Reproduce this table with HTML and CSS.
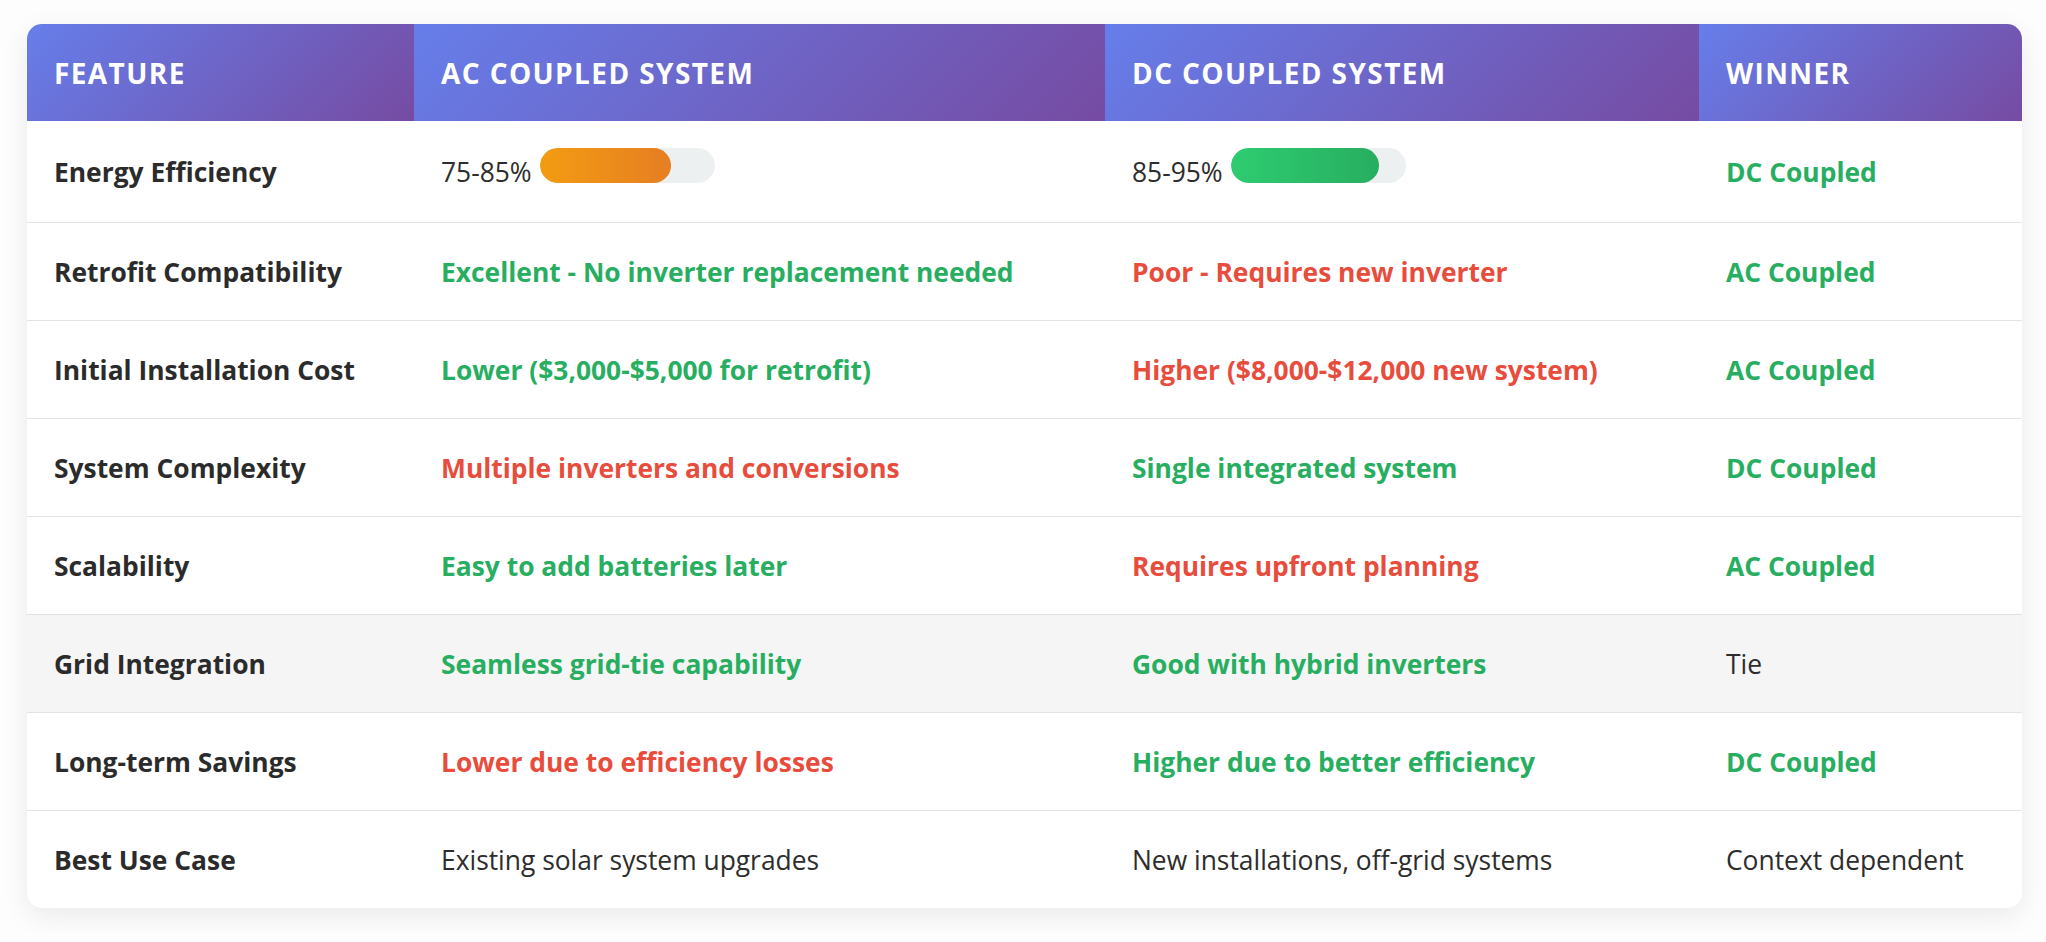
FILE: index.html
```html
<!DOCTYPE html>
<html lang="en">
<head>
<meta charset="utf-8">
<title>AC vs DC Coupled Systems</title>
<link rel="stylesheet" href="styles.css">
</head>
<body>
<div class="page">
  <div class="card">
    <table class="compare">
      <colgroup>
        <col class="c-feature">
        <col class="c-ac">
        <col class="c-dc">
        <col class="c-winner">
      </colgroup>
      <thead>
        <tr>
          <th>Feature</th>
          <th>AC Coupled System</th>
          <th>DC Coupled System</th>
          <th>Winner</th>
        </tr>
      </thead>
      <tbody>
        <tr class="row-first">
          <td class="feat">Energy Efficiency</td>
          <td><span class="pct">75-85%</span><span class="track"><span class="fill fill-orange" style="width:75%"></span></span></td>
          <td><span class="pct">85-95%</span><span class="track"><span class="fill fill-green" style="width:85%"></span></span></td>
          <td class="good">DC Coupled</td>
        </tr>
        <tr>
          <td class="feat">Retrofit Compatibility</td>
          <td class="good">Excellent - No inverter replacement needed</td>
          <td class="bad">Poor - Requires new inverter</td>
          <td class="good">AC Coupled</td>
        </tr>
        <tr>
          <td class="feat">Initial Installation Cost</td>
          <td class="good">Lower ($3,000-$5,000 for retrofit)</td>
          <td class="bad">Higher ($8,000-$12,000 new system)</td>
          <td class="good">AC Coupled</td>
        </tr>
        <tr>
          <td class="feat">System Complexity</td>
          <td class="bad">Multiple inverters and conversions</td>
          <td class="good">Single integrated system</td>
          <td class="good">DC Coupled</td>
        </tr>
        <tr>
          <td class="feat">Scalability</td>
          <td class="good">Easy to add batteries later</td>
          <td class="bad">Requires upfront planning</td>
          <td class="good">AC Coupled</td>
        </tr>
        <tr class="row-hover">
          <td class="feat">Grid Integration</td>
          <td class="good">Seamless grid-tie capability</td>
          <td class="good">Good with hybrid inverters</td>
          <td>Tie</td>
        </tr>
        <tr>
          <td class="feat">Long-term Savings</td>
          <td class="bad">Lower due to efficiency losses</td>
          <td class="good">Higher due to better efficiency</td>
          <td class="good">DC Coupled</td>
        </tr>
        <tr class="row-last">
          <td class="feat">Best Use Case</td>
          <td>Existing solar system upgrades</td>
          <td>New installations, off-grid systems</td>
          <td>Context dependent</td>
        </tr>
      </tbody>
    </table>
  </div>
</div>
</body>
</html>
```

FILE: styles.css
```css
* {
  box-sizing: border-box;
}

html, body {
  margin: 0;
  padding: 0;
  background: #fdfdfd;
}

body {
  font-family: "Open Sans", "Noto Sans", "Liberation Sans", sans-serif;
  color: #2d2d2d;
}

.page {
  padding: 24px 24px 24px 27px;
}

.card {
  background: #ffffff;
  border-radius: 15px;
  overflow: hidden;
  box-shadow: 0 8px 28px rgba(0, 0, 0, 0.08);
}

.compare {
  width: 100%;
  border-collapse: collapse;
  table-layout: fixed;
}

.c-feature { width: 387px; }
.c-ac { width: 691px; }
.c-dc { width: 594px; }
.c-winner { width: 323px; }

.compare th {
  background: linear-gradient(135deg, #667eea 0%, #764ba2 100%);
  color: #ffffff;
  text-align: left;
  text-transform: uppercase;
  font-weight: 700;
  font-size: 28px;
  letter-spacing: 1.4px;
  line-height: 46px;
  padding: 25.5px 27px;
  white-space: nowrap;
}

.compare td {
  font-size: 26.4px;
  line-height: 46px;
  padding: 25.5px 27px;
  border-bottom: 1px solid #e3e3e3;
  white-space: nowrap;
  font-weight: 400;
}

.compare tr.row-first td {
  padding-top: 27px;
  padding-bottom: 27px;
}

.compare tr.row-last td {
  border-bottom: none;
}

.compare tr.row-hover td {
  background: #f5f5f5;
}

.compare td.feat {
  font-weight: 700;
  color: #2b2b2b;
}

.compare td.good {
  color: #27ae60;
  font-weight: 700;
}

.compare td.bad {
  color: #e74c3c;
  font-weight: 700;
}

.pct {
  color: #2d2d2d;
}

.track {
  display: inline-block;
  width: 175px;
  height: 35px;
  margin-left: 8px;
  border-radius: 18px;
  background: #ecf0f1;
  overflow: hidden;
  vertical-align: -1px;
}

.fill {
  display: block;
  height: 100%;
  border-radius: 18px;
}

.fill-orange {
  background: linear-gradient(90deg, #f39c12, #e67e22);
}

.fill-green {
  background: linear-gradient(90deg, #2ecc71, #27ae60);
}
```
